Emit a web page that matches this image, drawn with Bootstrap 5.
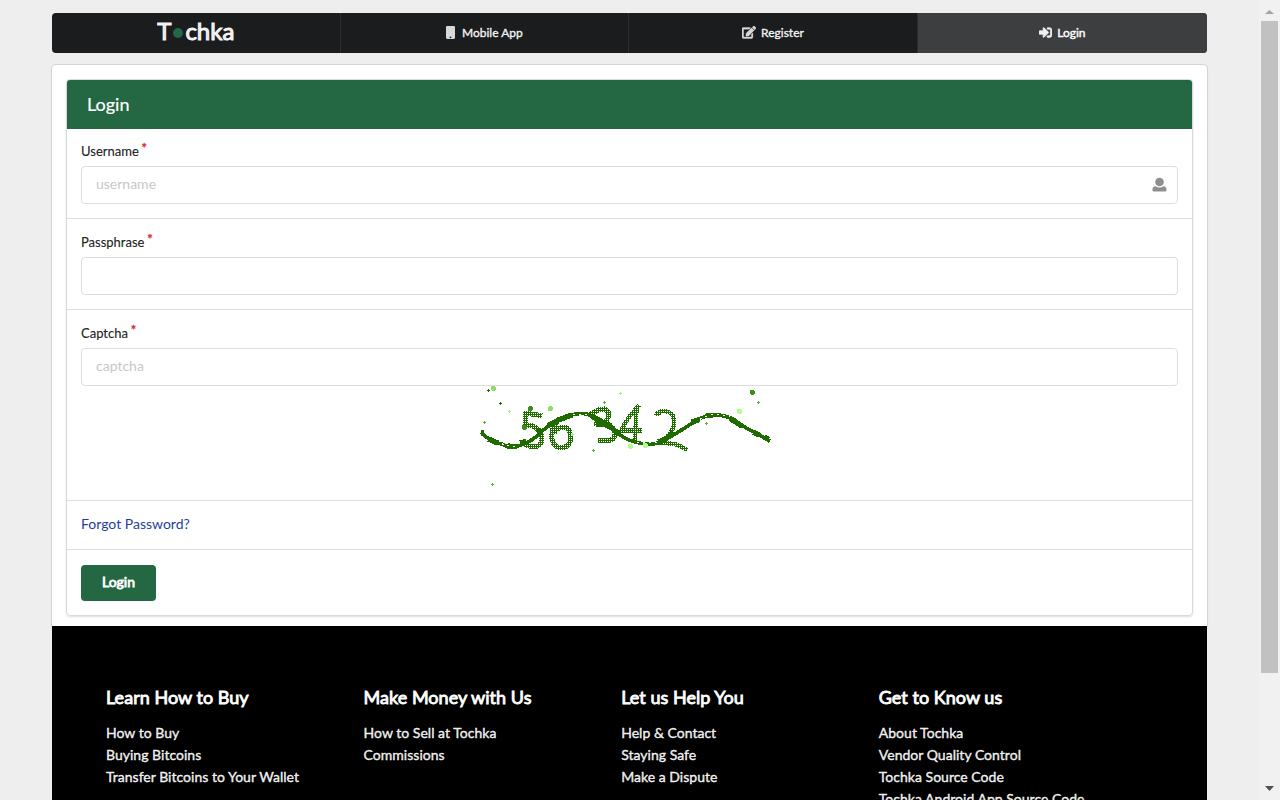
<!DOCTYPE html>
<html lang="en">
<head>
<meta charset="utf-8">
<title>Tochka - Login</title>
<link rel="stylesheet" href="https://cdn.jsdelivr.net/npm/bootstrap@5.3.0/dist/css/bootstrap.min.css">
<style>
  body { font-family: Lato, "Liberation Sans", sans-serif; font-size: 14px; line-height: 20px; color: rgba(0,0,0,.87); background: #eee; height: 100vh; overflow: hidden; }
  .page { width: 1155px; margin: 13px 52px 0; }
  .thick { -webkit-text-stroke: .4px currentColor; }
  .topmenu { height: 40px; border-radius: 4px; background: #1b1c1d; overflow: hidden; margin-bottom: 12px; }
  .topmenu a { flex: 0 0 288.6px; color: rgba(255,255,255,.9); text-decoration: none; font-size: 12px; border-right: 1px solid rgba(255,255,255,.08); padding-bottom: 1px; gap: 5px; }
  .topmenu a:last-child { border-right: 0; flex: 1 0 0; }
  .topmenu a.active { background: #3d3e3f; color: #fff; }
  .topmenu .brand { font-size: 24px; gap: 0; padding-bottom: 5px; -webkit-text-stroke: 1.1px currentColor; }
  .topmenu svg { opacity: .92; }
  .topmenu .phone { margin-right: 2px; }
  .brand-dot { width: 10px; height: 10px; border-radius: 50%; background: #236843; margin: 4px 2px 0; }
  .panel { background: #fff; border-radius: 4px 4px 0 0; box-shadow: 0 0 0 1px #d4d4d5, 0 1px 2px rgba(34,36,38,.15); padding: 14px 14px 10px; height: 561px; }
  .login-box { border: 1px solid #d9d9da; border-radius: 4px; box-shadow: 0 1px 2px rgba(34,36,38,.15); }
  .login-head { height: 49px; padding: 0 20px 2px; background: #236843; color: #fff; font-size: 18px; border-radius: 3px 3px 0 0; -webkit-text-stroke: .2px #fff; }
  .section { padding: 14px; border-bottom: 1px solid #dcddde; }
  .login-head + .section { margin-top: -1px; }
  .section:last-child { border-bottom: 0; }
  .section label { display: block; font-size: 13px; line-height: 18px; margin-bottom: 6px; -webkit-text-stroke: .2px currentColor; }
  .section label span { color: #db2828; position: relative; top: -3px; left: 3px; -webkit-text-stroke: .3px #db2828; }
  .section .form-control { height: 38px; border: 1px solid #dcddde; border-radius: 4px; padding: 0 14px 3px; font-size: 14px; box-shadow: none; }
  .form-control::placeholder { color: #c7c7c7; }
  .user-icon { right: 11px; top: 11px; }
  .forgot { color: #1e3f9e; text-decoration: none; display: block; margin: -1px 0 1px; }
  .login-btn { width: 75px; height: 36px; background: #236843; color: #fff; border: 0; border-radius: 4px; font-size: 14px; padding: 0 0 2px; display: block; margin-top: 1px; -webkit-text-stroke: .8px #fff; }
  .foot { background: #000; color: #fff; padding: 59px 54px 0; height: 400px; }
  .foot > div { width: 257.6px; }
  .foot h4 { font-size: 18px; line-height: 24px; font-weight: 400; margin: 0 0 13px; letter-spacing: .03px; -webkit-text-stroke: .85px #fff; }
  .foot a { display: block; color: rgba(255,255,255,.92); text-decoration: none; line-height: 22px; font-size: 14px; letter-spacing: .02px; }
  .bar { width: 21px; background: #f1f1f1; height: 100vh; padding: 10px 2px 9px; }
  .bar-thumb { height: 652px; width: 17px; background: #c1c1c1; margin-top: 7px; }
</style>
</head>
<body class="d-flex justify-content-between">
<main class="page">
  <nav class="topmenu d-flex">
    <a href="#" class="brand d-flex align-items-center justify-content-center"><span>T</span><i class="brand-dot"></i><span>chka</span></a>
    <a href="#" class="thick d-flex align-items-center justify-content-center"><svg class="phone" width="9" height="13" viewBox="0 0 320 512" preserveAspectRatio="none" fill="currentColor"><path d="M272 0H48C21.500 0 0 21.500 0 48v416c0 26.500 21.500 48 48 48h224c26.500 0 48-21.500 48-48V48c0-26.500-21.500-48-48-48zM160 480c-17.700 0-32-14.300-32-32s14.300-32 32-32 32 14.300 32 32-14.300 32-32 32z"/></svg>Mobile App</a>
    <a href="#" class="thick d-flex align-items-center justify-content-center"><svg width="14" height="12.500" viewBox="0 0 576 512" fill="currentColor" stroke="currentColor" stroke-width="14"><path d="M402.600 83.200l90.200 90.200c3.800 3.800 3.800 10 0 13.800L274.400 405.600l-92.800 10.300c-12.400 1.400-22.900-9.100-21.500-21.500l10.300-92.800L388.800 83.200c3.800-3.800 10-3.800 13.800 0zm162-22.900l-48.800-48.800c-15.200-15.200-39.900-15.200-55.200 0l-35.400 35.400c-3.800 3.800-3.800 10 0 13.800l90.200 90.200c3.800 3.800 10 3.800 13.800 0l35.400-35.400c15.200-15.300 15.200-40 0-55.200zM384 346.200V448H64V128h229.800c3.200 0 6.200-1.300 8.500-3.500l40-40c7.600-7.600 2.200-20.500-8.500-20.500H48C21.500 64 0 85.500 0 112v352c0 26.500 21.500 48 48 48h352c26.500 0 48-21.500 48-48V306.200c0-10.700-12.900-16-20.500-8.500l-40 40c-2.200 2.300-3.500 5.300-3.500 8.500z"/></svg>Register</a>
    <a href="#" class="active thick d-flex align-items-center justify-content-center"><svg width="13" height="13" viewBox="0 0 512 512" fill="currentColor" stroke="currentColor" stroke-width="26"><path d="M416 448h-84c-6.600 0-12-5.400-12-12v-40c0-6.600 5.400-12 12-12h84c17.700 0 32-14.300 32-32V160c0-17.700-14.300-32-32-32h-84c-6.600 0-12-5.400-12-12V76c0-6.600 5.400-12 12-12h84c53 0 96 43 96 96v192c0 53-43 96-96 96zm-47-209L201 71c-15-15-41-4.500-41 17v96H24c-13.300 0-24 10.700-24 24v96c0 13.300 10.700 24 24 24h136v96c0 21.500 26 32 41 17l168-168c9.300-9.400 9.300-24.600 0-34z"/></svg>Login</a>
  </nav>

  <div class="panel">
    <form class="login-box">
      <div class="login-head d-flex align-items-center">Login</div>
      <div class="section">
        <label>Username<span>*</span></label>
        <div class="position-relative">
          <input class="form-control" type="text" placeholder="username">
          <svg class="user-icon position-absolute" width="15" height="15" viewBox="0 0 15 15" fill="#8f8f8f"><circle cx="7.500" cy="5" r="4.300"/><path d="M3.500 9.300Q7.500 11.800 11.500 9.300Q14.600 9.500 14.600 13Q14.600 14.400 13.400 14.400H1.600Q.4 14.400 .4 13Q.4 9.500 3.500 9.300z"/></svg>
        </div>
      </div>
      <div class="section">
        <label>Passphrase<span>*</span></label>
        <input class="form-control" type="password">
      </div>
      <div class="section">
        <label>Captcha<span>*</span></label>
        <input class="form-control" type="text" placeholder="captcha">
        <svg class="d-block mx-auto" width="319" height="100" viewBox="0 18 957 300" shape-rendering="crispEdges">
          <defs>
            <pattern id="mesh" width="6" height="6" patternUnits="userSpaceOnUse"><path d="M0 0h6v3h-3v3h-3z" fill="#1f6b00"/></pattern>
          </defs>
          <g fill="none" stroke="url(#mesh)" stroke-width="15" stroke-linejoin="round">
            <path d="M217 107L165 99L166 136Q190 134 204 148Q222 164 213 190Q200 208 165 194"/>
            <path d="M262 124Q242 145 246 178Q253 205 277 203Q302 199 302 172Q300 141 280 141Q262 141 251 160"/>
            <path d="M360 104Q385 86 405 87Q424 98 411 120Q401 130 378 132Q414 130 430 146Q441 163 430 176Q415 187 384 180"/>
            <path stroke-width="13" d="M508 76Q470 115 453 151H515M500 82L494 190"/>
            <path stroke-width="13" d="M555 98L566 102L570 94Q596 89 608 106Q620 130 604 154Q590 178 568 190Q625 186 651 211"/>
          </g>
          <g fill="none" stroke="#1f6b00" stroke-linejoin="round">
            <path stroke-width="11" d="M34 157Q62 187 95 192Q120 206 145 198Q190 184 220 150Q270 105 320 102Q350 96 370 113Q400 138 430 148Q460 178 500 187Q545 200 580 183Q635 151 680 121Q730 91 790 117Q825 145 860 160L900 184"/>
            <path stroke-width="16" d="M33 159H42M55 177L85 190M112 198L140 200M150 189L170 184M200 158L213 150M233 138L265 120L305 105M367 110L405 130L425 139M378 132H405M430 150L450 162M565 186L585 178L612 157M665 126L688 119M708 107L730 106M780 115L818 140M850 157L868 165M883 172L896 178"/>
          </g>
          <path stroke="#fff" stroke-width="3" stroke-dasharray="6 12" fill="none" d="M95 191Q120 203 145 197M310 102H360M500 187H570M690 118Q730 92 780 111"/>
          <g fill="#8ce06a"><circle cx="70" cy="25" r="8"/><circle cx="241" cy="86" r="8"/></g>
          <g fill="#3d8c1c"><circle cx="181" cy="86" r="8"/><circle cx="163" cy="142" r="8"/><circle cx="847" cy="37" r="8"/></g>
          <g fill="#acff8c"><circle cx="808" cy="94" r="8"/><circle cx="481" cy="199" r="8"/><circle cx="526" cy="196" r="8"/></g>
          <g stroke-width="3" fill="none">
            <path stroke="#1f6b00" d="M51 31h9m-4.500-4.500v9M87 70h9m-4.500-4.500v9"/>
            <path stroke="#58b234" d="M39 127h9m-4.500-4.500v9M399 67h9m-4.500-4.500v9M366 211h9m-4.500-4.500v9M63 313h9m-4.500-4.500v9M861 67h9m-4.500-4.500v9M705 130h9m-4.500-4.500v9"/>
            <path stroke="#a4f184" d="M114 94h9m-4.500-4.500v9M447 40h9m-4.500-4.500v9M304 163h9m-4.500-4.500v9"/>
          </g>
        </svg>
      </div>
      <div class="section"><a href="#" class="forgot">Forgot Password?</a></div>
      <div class="section"><button type="button" class="login-btn">Login</button></div>
    </form>
  </div>

  <footer class="foot d-flex">
    <div><h4>Learn How to Buy</h4><a href="#" class="thick">How to Buy</a><a href="#" class="thick">Buying Bitcoins</a><a href="#" class="thick">Transfer Bitcoins to Your Wallet</a></div>
    <div><h4>Make Money with Us</h4><a href="#" class="thick">How to Sell at Tochka</a><a href="#" class="thick">Commissions</a></div>
    <div><h4>Let us Help You</h4><a href="#" class="thick">Help &amp; Contact</a><a href="#" class="thick">Staying Safe</a><a href="#" class="thick">Make a Dispute</a></div>
    <div><h4>Get to Know us</h4><a href="#" class="thick">About Tochka</a><a href="#" class="thick">Vendor Quality Control</a><a href="#" class="thick">Tochka Source Code</a><a href="#" class="thick">Tochka Android App Source Code</a></div>
  </footer>
</main>
<div class="bar d-flex flex-column align-items-center">
  <svg width="9" height="4" viewBox="0 0 9 4"><path d="M0 4L4.500 0L9 4z" fill="#a3a3a3"/></svg>
  <div class="bar-thumb"></div>
  <svg class="mt-auto" width="9" height="5" viewBox="0 0 9 5"><path d="M0 0H9L4.500 5z" fill="#505050"/></svg>
</div>
<script src="https://cdn.jsdelivr.net/npm/bootstrap@5.3.0/dist/js/bootstrap.bundle.min.js"></script>
</body>
</html>
